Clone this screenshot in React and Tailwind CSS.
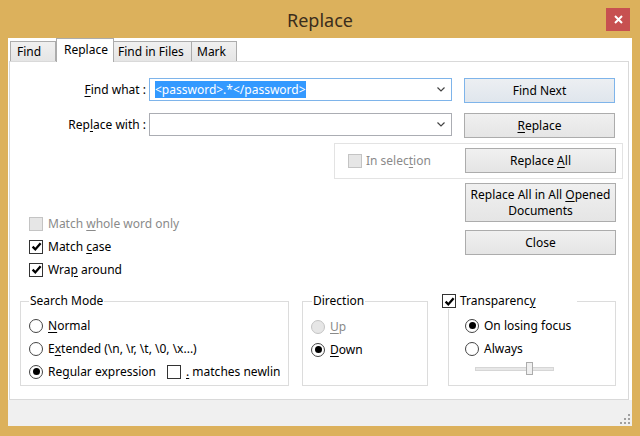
const U = ({ children }) => <span className="underline underline-offset-2">{children}</span>;

function Check({ checked, disabled }) {
  return (
    <span
      className={`flex h-[14px] w-[14px] shrink-0 items-center justify-center border ${
        disabled ? 'border-[#c4c4c4] bg-[#e6e6e6]' : 'border-[#333] bg-white'
      }`}
    >
      {checked && (
        <svg width="11" height="11" viewBox="0 0 11 11">
          <path d="M1.6 5.6 L4.3 8.4 L9.6 2.2" fill="none" stroke="#000" strokeWidth="2.3" />
        </svg>
      )}
    </span>
  );
}

function Radio({ checked, disabled }) {
  return (
    <span
      className={`flex h-[14px] w-[14px] shrink-0 items-center justify-center rounded-full border ${
        disabled ? 'border-[#c4c4c4] bg-[#e6e6e6]' : 'border-[#444] bg-white'
      }`}
    >
      {checked && <span className="h-[7px] w-[7px] rounded-full bg-black" />}
    </span>
  );
}

function Btn({ children, primary, className = '' }) {
  return (
    <button
      className={`w-[151px] border text-[12px] leading-[16px] text-black ${
        primary
          ? 'border-[#7eb4ea] bg-linear-to-b from-[#eceff2] to-[#e0e6ed]'
          : 'border-[#acacac] bg-linear-to-b from-[#f0f0f0] to-[#e5e5e5]'
      } ${className}`}
    >
      {children}
    </button>
  );
}

function Combo({ focused, children }) {
  return (
    <div
      className={`flex h-[23px] w-[303px] items-center border bg-white pl-[5px] pr-[6px] ${
        focused ? 'border-[#7eb4ea]' : 'border-[#abadb3]'
      }`}
    >
      <div className="flex-1 truncate">{children}</div>
      <svg width="8" height="5" viewBox="0 0 8 5">
        <path d="M0.5 0.5 L4 4 L7.5 0.5" fill="none" stroke="#444" strokeWidth="1.2" />
      </svg>
    </div>
  );
}

function Row({ children, className = '' }) {
  return <div className={`flex h-[23px] items-center gap-[5px] ${className}`}>{children}</div>;
}

export default function App() {
  return (
    <div className="flex h-[436px] w-[640px] flex-col bg-[#dcb15c] font-['Noto_Sans','DejaVu_Sans',sans-serif] text-[12px] text-black">
      {/* title bar */}
      <div className="grid h-[38px] grid-cols-[1fr_auto_1fr] items-center">
        <div />
        <div className="pt-[2px] text-[18px] leading-none text-[#3a2d1c]">Replace</div>
        <div className="flex justify-end pr-[10px]">
          <div className="flex h-[23px] w-[24px] items-center justify-center bg-[#c75050]">
            <svg width="9" height="9" viewBox="0 0 9 9">
              <path d="M1 1 L8 8 M8 1 L1 8" stroke="#fff" strokeWidth="2" />
            </svg>
          </div>
        </div>
      </div>

      {/* client area */}
      <div className="mx-[8px] mb-[10px] flex flex-1 flex-col bg-white">
        {/* tabs */}
        <div className="flex h-[23px] items-end pl-[2px]">
          <div className="flex h-[20px] w-[46px] items-center border border-b-0 border-[#acacac] bg-linear-to-b from-[#f0f0f0] to-[#e5e5e5] pl-[6px]">
            Find
          </div>
          <div className="relative z-10 -mb-px flex h-[24px] w-[58px] items-start border border-b-0 border-[#acacac] bg-white pl-[7px] pt-[2px]">
            Replace
          </div>
          <div className="flex h-[20px] w-[78px] items-center border border-b-0 border-l-0 border-[#acacac] bg-linear-to-b from-[#f0f0f0] to-[#e5e5e5] pl-[4px]">
            Find in Files
          </div>
          <div className="flex h-[20px] w-[45px] items-center border border-b-0 border-l-0 border-[#acacac] bg-linear-to-b from-[#f0f0f0] to-[#e5e5e5] pl-[5px]">
            Mark
          </div>
        </div>

        {/* panel */}
        <div className="ml-[1px] mr-[3px] flex h-[339px] flex-col border border-[#d9d9d9] bg-white">
          <div className="mt-[16px] flex items-start">
            <div className="mt-[3px] w-[136px] text-right">
              <U>F</U>ind what :
            </div>
            <div className="ml-[3px]">
              <Combo focused>
                <span className="bg-[#3399ff] text-white">&lt;password&gt;.*&lt;/password&gt;</span>
              </Combo>
            </div>
            <Btn primary className="ml-[12px] h-[25px]">
              Find Next
            </Btn>
          </div>

          <div className="mt-[10px] flex items-start">
            <div className="mt-[3px] w-[136px] text-right">
              Rep<U>l</U>ace with :
            </div>
            <div className="ml-[3px]">
              <Combo />
            </div>
            <Btn className="ml-[12px] h-[25px]">
              <U>R</U>eplace
            </Btn>
          </div>

          <div className="ml-[324px] mt-[5px] flex h-[36px] w-[289px] items-start border border-[#e3e3e3] pl-[13px] pt-[4px]">
            <div className="mt-[4px] flex w-[117px] items-center gap-[4px] text-[#8a8a8a]">
              <Check disabled />
              <span>
                In selec<U>t</U>ion
              </span>
            </div>
            <Btn className="h-[25px]">
              Replace <U>A</U>ll
            </Btn>
          </div>

          <div className="flex h-[114px]">
            <div className="w-[455px] pl-[19px] pt-[33px]">
              <Row className="text-[#8a8a8a]">
                <Check disabled />
                <span>
                  Match <U>w</U>hole word only
                </span>
              </Row>
              <Row>
                <Check checked />
                <span>
                  Match <U>c</U>ase
                </span>
              </Row>
              <Row>
                <Check checked />
                <span>
                  Wra<U>p</U> around
                </span>
              </Row>
            </div>
            <div className="flex flex-col pt-[4px]">
              <Btn className="h-[39px]">
                Replace All in All <U>O</U>pened
                <br />
                Documents
              </Btn>
              <Btn className="mt-[8px] h-[25px]">Close</Btn>
            </div>
          </div>

          <div className="ml-[10px] flex items-start">
            <fieldset className="h-[93px] w-[269px] border border-[#dcdcdc] pl-[8px]">
              <legend className="px-[1px] leading-[16px]">Search Mode</legend>
              <div className="pt-[5px]">
                <Row>
                  <Radio />
                  <span>
                    <U>N</U>ormal
                  </span>
                </Row>
                <Row>
                  <Radio />
                  <span>
                    E<U>x</U>tended (\n, \r, \t, \0, \x...)
                  </span>
                </Row>
                <Row>
                  <div className="flex w-[133px] items-center gap-[5px]">
                    <Radio checked />
                    <span>
                      Re<U>g</U>ular expression
                    </span>
                  </div>
                  <Check />
                  <span className="w-[94px] overflow-hidden whitespace-nowrap">
                    <U>.</U> matches newline
                  </span>
                </Row>
              </div>
            </fieldset>

            <fieldset className="ml-[13px] h-[93px] w-[126px] border border-[#dcdcdc] pl-[8px]">
              <legend className="ml-[1px] px-[1px] leading-[16px]">Direction</legend>
              <div className="pt-[6px]">
                <Row className="text-[#8a8a8a]">
                  <Radio disabled />
                  <span>
                    <U>U</U>p
                  </span>
                </Row>
                <Row>
                  <Radio checked />
                  <span>
                    <U>D</U>own
                  </span>
                </Row>
              </div>
            </fieldset>

            <fieldset className="ml-[20px] h-[93px] w-[168px] border border-[#dcdcdc] pl-[16px]">
              <legend className="-ml-[23px] flex h-[16px] w-[135px] items-center gap-[4px]">
                <Check checked />
                <span>
                  Transparenc<U>y</U>
                </span>
              </legend>
              <div className="pt-[5px]">
                <Row>
                  <Radio checked />
                  <span>On losing focus</span>
                </Row>
                <Row>
                  <Radio />
                  <span>Always</span>
                </Row>
                <div className="ml-[10px] mt-[2px] flex h-[14px] w-[79px] items-center">
                  <div className="relative h-[4px] w-full border border-[#d6d6d6] bg-[#e7e7e7]">
                    <div className="absolute left-[50px] top-[-6px] h-[13px] w-[7px] border border-[#acacac] bg-[#f0f0f0]" />
                  </div>
                </div>
              </div>
            </fieldset>
          </div>
        </div>

        {/* bottom strip */}
        <div className="flex flex-1 items-end justify-end bg-[#f0f0f0] pb-[2px] pr-[2px]">
          <svg width="10" height="10" viewBox="0 0 10 10" fill="#a0a0a0">
            <rect x="8" y="0" width="2" height="2" />
            <rect x="4" y="4" width="2" height="2" />
            <rect x="8" y="4" width="2" height="2" />
            <rect x="0" y="8" width="2" height="2" />
            <rect x="4" y="8" width="2" height="2" />
            <rect x="8" y="8" width="2" height="2" />
          </svg>
        </div>
      </div>
    </div>
  );
}
